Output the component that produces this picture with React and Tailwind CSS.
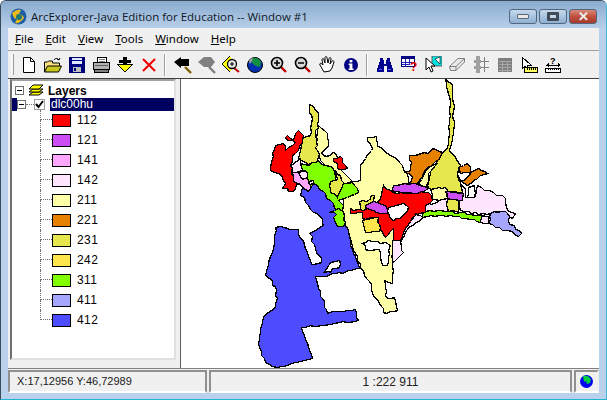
const palette = {
  112: "#ff0000",
  121: "#cc4df2",
  141: "#ffa6ff",
  142: "#ffe6ff",
  211: "#ffffa8",
  221: "#e68000",
  231: "#e6e64d",
  242: "#ffe64d",
  311: "#80ff00",
  411: "#a6a6ff",
  412: "#4d4dff",
};

const classes = [112, 121, 141, 142, 211, 221, 231, 242, 311, 411, 412];

// Land-cover parcels, painted back to front in map coordinates.
const parcels = [
  [211, "343,198 345,183 352,181 360,180 360,165 372,148 367,140 367,137 376,136 377,146 387,153 397,159 405,172 408,182 425,205 392,240 392,283 384,280 387,298 394,297 397,310 383,312 381,306 360,268 343,220"],
  [231, "445,79 452,84 453,130 452,140 449,150 460,165 457,173 462,192 445,190 428,188 430,170 438,160 442,152 447,147 449,130 450,100 447,90"],
  [142, "457,175 465,188 465,197 474,197 477,185 493,192 505,198 507,210 515,213 512,218 497,211 490,213 483,213 460,210 458,200 463,195"],
  [142, "424,205 447,198 448,211 424,212"],
  [231, "447,199 458,200 458,211 448,211"],
  [142, "422,217 420,220 408,227 400,242 403,252 392,262 392,240 400,238 405,228 415,214"],
  [142, "482,215 488,216 488,223 480,222"],
  [311, "422,213 425,211 448,211 460,212 482,215 480,222 450,215 422,217"],
  [411, "490,213 500,211 507,213 508,220 515,229 521,233 518,236 507,230 488,223"],
  [221, "409,155 427,153 432,148 442,152 438,160 427,167 417,183 407,185 412,177 405,172 410,170"],
  [221, "458,167 467,163 470,172 478,168 487,173 480,175 467,185 460,180 467,177 470,173 460,173"],
  [211, "418,183 428,167 437,163 428,173 427,188"],
  [211, "430,189 445,187 447,198 431,199"],
  [231, "359,201 369,200 371,195 374,195 374,202 365,205 365,210 360,210"],
  [112, "383,185 393,192 428,192 432,200 425,205 425,212 415,213 405,228 400,240 393,240 393,228 385,237 378,228 378,218 362,218 362,212 350,213 350,208 363,210 377,202 380,198"],
  [242, "362,220 378,217 379,231 365,232"],
  [121, "393,185 415,183 428,188 417,193 393,191"],
  [121, "365,205 373,201 385,205 388,213 380,213 365,207"],
  [121, "445,191 463,193 462,200 447,198"],
  [211, "318,125 327,133 328,145 321,152 326,156 333,152 337,158 341,170 352,181 345,183 338,180 335,175 320,160 318,152 315,147 317,132"],
  [231, "309,104 313,106 318,112 318,127 315,130 317,145 315,147 318,152 318,162 308,164 298,158 303,137 310,135 312,118 309,108"],
  [311, "300,163 308,165 318,160 325,165 333,168 335,180 340,184 352,182 358,192 343,198 338,200 343,205 343,218 345,222 343,226 337,226 331,222 333,217 328,210 300,185"],
  [231, "330,181 337,179 335,170 340,175 343,182 337,197 330,192"],
  [112, "333,158 340,156 342,162 347,168 338,169 337,163 333,161"],
  [112, "298,130 303,135 298,150 292,155 290,165 292,175 298,182 293,191 282,188 285,183 278,173 270,170 272,153 275,145 283,143 285,150 295,142 285,137 287,135 293,140 295,133"],
  [142, "290,165 300,158 302,170 292,173"],
  [141, "292,172 298,172 305,170 307,178 312,190 308,191 300,184 293,181"],
  [142, "298,172 305,170 307,177 302,179"],
  [142, "308,181 313,180 313,183 309,184"],
  [412, "302,187 308,191 313,183 333,203 342,218 347,227 350,240 359,268 323,276 315,276 327,313 355,309 358,320 301,327 312,358 277,367 265,362 258,343 264,315 275,307 277,298 272,280 265,275 268,262 273,248 275,227 298,229 311,264 321,262 309,233 323,225 322,218 313,212 300,195"],
  [311, "329,212 336,214 333,217 337,226 343,226 345,222 343,212 338,208"],
];

// Gaps left unclassified inside the built-up area.
const holes = [
  "388,207 403,203 408,207 403,215 393,220 388,213",
  "362,243 368,240 385,242 390,245 387,265 382,265 379,249 365,249",
  "330,262 339,260 339,267 332,268 330,272 323,272 327,267",
  "468,187 474,185 474,197 467,197",
];

// Raster-digitised boundaries are stair-stepped, so break each edge into short uneven runs.
function rough(points) {
  const pts = points.split(" ").map((p) => p.split(",").map(Number));
  const out = [];
  pts.forEach(([x, y], i) => {
    const [nx, ny] = pts[(i + 1) % pts.length];
    const steps = Math.max(1, Math.round(Math.hypot(nx - x, ny - y) / 4));
    for (let s = 0; s < steps; s++) {
      const px = x + ((nx - x) * s) / steps;
      const py = y + ((ny - y) * s) / steps;
      const h = Math.sin(px * 12.9898 + py * 78.233) * 43758.5453;
      const f = h - Math.floor(h);
      const off = s === 0 ? 0 : f < 0.2 ? -1 : f > 0.8 ? 1 : 0;
      out.push(`${Math.round(px + off) + 0.5},${Math.round(py - off) + 0.5}`);
    }
  });
  return out.join(" ");
}

function Cursor() {
  return <path d="M1 1v12l3-3 2 5 2-1-2-5h4z" fill="#fff" stroke="#000" />;
}

function MagnifierBase({ children }) {
  return (
    <svg width="18" height="18" viewBox="0 0 18 18">
      <path d="M10 10l6 6" stroke="#c00000" strokeWidth="2.4" />
      <circle cx="7" cy="7" r="5.500" fill="#d8d8d8" stroke="#000" strokeWidth="1.6" />
      {children}
    </svg>
  );
}

// Toolbar glyphs, drawn on a small grid.
const icons = {
  newFile: (
    <svg width="14" height="16" viewBox="0 0 14 16">
      <path d="M1.500.5h7l4 4v11h-11z" fill="#fff" stroke="#000" />
      <path d="M8.500.5v4h4" fill="none" stroke="#000" />
    </svg>
  ),
  open: (
    <svg width="18" height="16" viewBox="0 0 18 16">
      <path d="M10 3c1-2 4-2 5 0M15 3l-2-1M15 3l1-2" fill="none" stroke="#000" />
      <path d="M.5 15V5h3l1-1h4v2h7v3" fill="#ffe080" stroke="#000" />
      <path d="M.5 15l3-6h14l-3 6z" fill="#c8c820" stroke="#000" />
    </svg>
  ),
  save: (
    <svg width="16" height="16" viewBox="0 0 16 16" shapeRendering="crispEdges">
      <rect width="15" height="15" x=".5" y=".5" fill="#000080" stroke="#00006a" />
      <rect x="3" y="1" width="10" height="6" fill="#dfe6ff" />
      <rect x="3" y="3" width="10" height="1" fill="#000080" />
      <rect x="4" y="10" width="8" height="5" fill="#c0c0c0" />
      <rect x="5" y="11" width="2" height="3" fill="#000080" />
    </svg>
  ),
  print: (
    <svg width="17" height="16" viewBox="0 0 17 16" shapeRendering="crispEdges">
      <path d="M5 .5h8l1 5H4z" fill="#fff" stroke="#000" />
      <path d="M6 2h6M6 4h6" stroke="#808080" />
      <rect x=".5" y="5.500" width="16" height="7" fill="#b0b0b0" stroke="#000" />
      <rect x="2" y="8" width="13" height="1" fill="#606060" />
      <rect x="1.500" y="12.500" width="14" height="3" fill="#808080" stroke="#000" />
    </svg>
  ),
  download: (
    <svg width="16" height="16" viewBox="0 0 16 16" shapeRendering="crispEdges">
      <path d="M6 0h4v3h4v3h-4v1H6V6H2V3h4z" fill="#000" />
      <path d="M.5 7.500h15L8 15z" fill="#ffff00" stroke="#000" />
    </svg>
  ),
  close: (
    <svg width="14" height="14" viewBox="0 0 14 14">
      <path d="M1 1l12 12M13 1L1 13" stroke="#f00000" strokeWidth="2" />
    </svg>
  ),
  back: (
    <svg width="18" height="18" viewBox="0 0 18 18">
      <path d="M11 11l6 6" stroke="#806000" strokeWidth="2.4" />
      <path d="M0 6l7-5v2h8v7H7v2z" fill="#000" />
    </svg>
  ),
  forward: (
    <svg width="18" height="18" viewBox="0 0 18 18">
      <path d="M11 11l6 6" stroke="#808080" strokeWidth="2.4" />
      <path d="M0 6l6-5h7l4 5-4 5H6z" fill="#808080" />
    </svg>
  ),
  fullExtent: (
    <svg width="18" height="18" viewBox="0 0 18 18">
      <path d="M8 0l-8 8 8 8" fill="#ffff00" stroke="#000" />
      <path d="M8 1L1 8l7 7 4-4V5z" fill="#ffff00" />
      <path d="M12 12l5 4" stroke="#c00000" strokeWidth="2" />
      <circle cx="10" cy="8" r="4.500" fill="#e8e8e8" stroke="#000" strokeWidth="1.3" />
      <path d="M8 8h4M10 6v4" stroke="#000" />
    </svg>
  ),
  globe: (
    <svg width="16" height="16" viewBox="0 0 16 16">
      <circle cx="8" cy="8" r="7.500" fill="#0030b0" stroke="#000" />
      <path d="M6 1c3-1 7 1 8 4l-1 5-4-1-3-2-2-3z" fill="#109040" />
      <path d="M2 4C3 2 5 1 6 1L5 4 3 7z" fill="#a0a0a0" />
    </svg>
  ),
  zoomIn: (
    <MagnifierBase>
      <path d="M4 7h6M7 4v6" stroke="#000" strokeWidth="1.6" />
    </MagnifierBase>
  ),
  zoomOut: (
    <MagnifierBase>
      <path d="M4 7h6" stroke="#000" strokeWidth="1.6" />
    </MagnifierBase>
  ),
  hand: (
    <svg width="16" height="17" viewBox="0 0 16 17">
      <path d="M5 16L1 9c-1-2 1-2 2-1l1 1-1-5c0-2 2-2 2 0l1 3V2c0-2 2-2 2 0l1 5 1-4c0-2 2-2 2 0l-1 5 2-3c1-1 2 0 2 1l-2 6-2 3z" fill="#fff" stroke="#000" />
    </svg>
  ),
  info: (
    <svg width="14" height="14" viewBox="0 0 14 14">
      <circle cx="7" cy="7" r="7" fill="#000080" />
      <rect x="5.600" y="2" width="2.800" height="2.400" fill="#fff" />
      <path d="M4.600 5.600h3.800v5h1.200V12H4.600v-1.400h1V7H4.600z" fill="#fff" />
    </svg>
  ),
  find: (
    <svg width="16" height="14" viewBox="0 0 16 14" shapeRendering="crispEdges">
      <path d="M3 0h3v2h1v4h2V2h1V0h3v3l3 8v3h-6V8H7v6H0v-3l3-8z" fill="#000090" />
      <path d="M2 11h3M11 11h3" stroke="#6060ff" />
    </svg>
  ),
  attributes: (
    <svg width="16" height="17" viewBox="0 0 16 17" shapeRendering="crispEdges">
      <rect x=".5" y=".5" width="13" height="10" fill="#fff" stroke="#000080" />
      <rect x="1" y="1" width="12" height="2" fill="#000080" />
      <path d="M1 6h12M1 8.500h7M4.500 3v8M8.500 3v6" stroke="#2020c0" />
      <text x="9" y="15" fontFamily="Liberation Sans, sans-serif" fontSize="12" fontWeight="700" fill="#f00000">?</text>
    </svg>
  ),
  select: (
    <svg width="17" height="17" viewBox="0 0 17 17">
      <rect x="7" y="0" width="10" height="10" fill="#00e0e0" stroke="#606060" />
      <path d="M10 3l5 5V1z" fill="#fff" stroke="#000" strokeWidth=".6" />
      <g transform="translate(0 1)">
        <Cursor />
      </g>
    </svg>
  ),
  eraser: (
    <svg width="16" height="13" viewBox="0 0 16 13">
      <path d="M.5 8.500L9 .5h6.500v3.500L7 12.500H1.500z" fill="#e8e8e8" stroke="#808080" />
      <path d="M.5 8.500h6.500v4M7 8.500l8.500-8" fill="none" stroke="#808080" />
    </svg>
  ),
  graticule: (
    <svg width="15" height="17" viewBox="0 0 15 17" shapeRendering="crispEdges">
      <path d="M2 0h4v17H2zM0 4h7v3H0zM0 10h7v3H0z" fill="#a0a0a0" />
      <path d="M10 1v15M7 5h8M7 11h8" stroke="#808080" />
    </svg>
  ),
  table: (
    <svg width="14" height="14" viewBox="0 0 14 14" shapeRendering="crispEdges">
      <rect width="14" height="14" fill="#808080" />
      <path d="M1 3.500h12M1 6.500h12M1 9.500h12M1 12.500h12M4.500 3v11M9.500 3v11" stroke="#a8a8a8" />
    </svg>
  ),
  measure: (
    <svg width="17" height="17" viewBox="0 0 17 17" shapeRendering="crispEdges">
      <Cursor />
      <rect x="3.500" y="11.500" width="13" height="5" fill="#ffff60" stroke="#000" />
      <path d="M6 12v2M8 12v2M10 12v2M12 12v2M14 12v2" stroke="#000" />
    </svg>
  ),
  scale: (
    <svg width="16" height="16" viewBox="0 0 16 16" shapeRendering="crispEdges">
      <path d="M1 8h14M3 6v4M2 7v2M13 6v4M14 7v2" stroke="#000" />
      <text x="5" y="7" fontFamily="Liberation Sans, sans-serif" fontSize="9" fontWeight="700" fill="#000">?</text>
      <rect x=".5" y="11.500" width="15" height="4" fill="#fff" stroke="#000" />
      <path d="M3 12v1M5 12v1M7 12v1M9 12v1M11 12v1M13 12v1" stroke="#000" />
    </svg>
  ),
};

const fileTools = ["newFile", "open", "save", "print", "download", "close"];
const mapTools = ["back", "forward", "fullExtent", "globe", "zoomIn", "zoomOut", "hand", "info"];
const queryTools = ["find", "attributes", "select", "eraser", "graticule", "table", "measure", "scale"];

function ToolButton({ name }) {
  return <div className="flex h-6 w-6 shrink-0 items-center justify-center">{icons[name]}</div>;
}

function Separator() {
  return <div className="ml-[3px] mr-[5px] h-[22px] w-[2px] shrink-0 border-l border-r border-l-[#a0a0a0] border-r-white" />;
}

function LegendRow({ code, last }) {
  return (
    <div className="flex h-5 items-center">
      <div className="flex h-5 w-3 shrink-0 flex-col">
        <div className="h-[10px] border-b border-l border-dotted border-[#707070]" />
        {!last && <div className="h-[10px] border-l border-dotted border-[#707070]" />}
      </div>
      <div className="h-[13px] w-[19px] shrink-0 border border-black" style={{ backgroundColor: palette[code] }} />
      <span className="ml-[6px] tracking-[0.4px]">{code}</span>
    </div>
  );
}

function WindowButton({ className, children }) {
  return (
    <div className={`flex h-[15px] w-7 items-center justify-center rounded-[3px] border border-[#51677f] ${className}`}>
      {children}
    </div>
  );
}

export default function App() {
  return (
    <div className="flex h-[400px] w-[607px] flex-col overflow-hidden rounded-t-[6px] border border-[#37495a] border-b-[#20b8d0] border-r-[#40b8d0] bg-[#b9d1ea] font-['Liberation_Sans',sans-serif] text-[12px] text-black">
      <header className="flex h-[27px] shrink-0 items-center bg-gradient-to-b from-[#8aabd0] to-[#b7cfe8] pl-[9px] pr-[9px] pt-[4px]">
        <svg width="17" height="17" viewBox="0 0 17 17" className="shrink-0">
          <circle cx="8.500" cy="8.500" r="8" fill="#1c5fa8" />
          <path d="M2 5c3-3 6-4 9-3l-2 4c2 0 4 1 5 4-3 4-6 6-9 5l2-4C4 11 3 8 2 5z" fill="#e8b820" />
          <circle cx="9" cy="9" r="3" fill="#207a70" />
        </svg>
        <span className="ml-1 whitespace-nowrap font-['Open_Sans',sans-serif] text-[11.5px] text-[#101828]">
          ArcExplorer-Java Edition for Education -- Window #1
        </span>
        <div className="ml-auto flex gap-[2px]">
          <WindowButton className="bg-gradient-to-b from-[#c5d8ec] to-[#8fb0d3]">
            <div className="h-[5px] w-[12px] rounded-[1px] border border-[#5a6a7a] bg-[#e8e8e8]" />
          </WindowButton>
          <WindowButton className="bg-gradient-to-b from-[#c5d8ec] to-[#8fb0d3]">
            <div className="h-[9px] w-[12px] rounded-[1px] border-[3px] border-[#404a58] bg-[#c8d8e8]" />
          </WindowButton>
          <WindowButton className="border-[#5a2020] bg-gradient-to-b from-[#d98a78] via-[#c0503e] to-[#a53a2c]">
            <span className="text-[13px] font-bold leading-none text-[#f0f0f0]">✕</span>
          </WindowButton>
        </div>
      </header>

      <div className="mx-[7px] flex h-[365px] flex-col bg-[#f0f0f0]">
        <nav className="flex h-[22px] shrink-0 items-center gap-[12px] pl-[7px] font-['Noto_Sans',sans-serif] text-[11.5px]">
          <span><u>F</u>ile</span>
          <span><u>E</u>dit</span>
          <span><u>V</u>iew</span>
          <span><u>T</u>ools</span>
          <span><u>W</u>indow</span>
          <span><u>H</u>elp</span>
        </nav>

        <div className="flex h-[29px] shrink-0 items-center border-b border-t border-b-[#404040] border-t-[#a0a0a0] pl-[3px]">
          <div className="mr-[3px] h-[21px] w-[3px] shrink-0 border-l border-r border-l-white border-r-[#a0a0a0]" />
          {fileTools.map((t) => <ToolButton key={t} name={t} />)}
          <Separator />
          {mapTools.map((t) => <ToolButton key={t} name={t} />)}
          <Separator />
          {queryTools.map((t) => <ToolButton key={t} name={t} />)}
        </div>

        <main className="flex min-h-0 flex-1">
          <aside className="flex w-[172px] shrink-0 flex-col pb-[8px] pl-[2px] pr-[4px]">
            <div className="flex-1 overflow-hidden border-2 border-b-[#e0e0e0] border-l-[#707070] border-r-[#e0e0e0] border-t-[#a0a0a0] bg-white pt-[2px]">
              <div className="flex h-[15px] items-center pl-[3px]">
                <div className="flex h-[9px] w-[9px] items-center justify-center border border-[#707070]">
                  <div className="h-px w-[5px] bg-black" />
                </div>
                <svg width="16" height="14" viewBox="0 0 16 14" className="ml-[4px]">
                  <path d="M1 11l4-3h10l-4 3z" fill="#ffff00" stroke="#000" />
                  <path d="M1 8l4-3h10l-4 3z" fill="#ffff00" stroke="#000" />
                  <path d="M1 5l4-4h10l-4 4z" fill="#ffff00" stroke="#000" />
                </svg>
                <span className="ml-[4px] font-bold">Layers</span>
              </div>
              <div className="flex h-[13px] items-center">
                <div className="h-full w-[5px] shrink-0 bg-[#000060]" />
                <div className="flex h-[9px] w-[9px] shrink-0 items-center justify-center border border-[#707070] bg-white">
                  <div className="h-px w-[5px] bg-black" />
                </div>
                <div className="w-[8px] border-t border-dotted border-[#707070]" />
                <div className="flex h-[11px] w-[11px] shrink-0 items-center justify-center border border-[#a0a0a0]">
                  <svg width="9" height="9" viewBox="0 0 9 9">
                    <path d="M1 4l2.500 3L8 1" fill="none" stroke="#000" strokeWidth="2" />
                  </svg>
                </div>
                <div className="ml-[5px] h-full flex-1 bg-[#000060] pl-[1px] leading-[13px] text-white">
                  dlc00hu
                </div>
              </div>
              <div className="ml-[28px] mt-[-1px]">
                {classes.map((c, i) => (
                  <LegendRow key={c} code={c} last={i === classes.length - 1} />
                ))}
              </div>
            </div>
          </aside>
          <section className="min-w-0 flex-1 border-l border-[#606060] bg-white">
            <svg width="417" height="289" viewBox="181 79 417 289" className="block" shapeRendering="crispEdges">
              {parcels.map(([code, points], i) => (
                <polygon key={i} points={rough(points)} fill={palette[code]} stroke="#000" strokeWidth="1.3" />
              ))}
              {holes.map((points, i) => (
                <polygon key={i} points={rough(points)} fill="#fff" stroke="#000" strokeWidth="1.3" />
              ))}
            </svg>
          </section>
        </main>

        <footer className="flex h-[25px] shrink-0 gap-[2px] border-t border-[#808080] pt-[1px]">
          <div className="flex h-[23px] w-[199px] items-center border-2 border-b-white border-l-[#909090] border-r-[#909090] border-t-[#909090] pl-[7px] text-[11px] text-[#202020]">
            X:17,12956 Y:46,72989
          </div>
          <div className="flex h-[23px] flex-1 items-center justify-center border-2 border-b-white border-l-[#909090] border-r-[#909090] border-t-[#909090] text-[#202020]">
            1 :222 911
          </div>
          <div className="flex h-[23px] w-[25px] items-center justify-center border-2 border-b-white border-l-[#909090] border-r-[#f0f0f0] border-t-[#909090]">
            <svg width="13" height="13" viewBox="0 0 13 13">
              <circle cx="6.500" cy="6.500" r="6.500" fill="#0000f0" />
              <path d="M3 1c3-1 6 0 8 3l-1 4-3 1-1-3-2 1z" fill="#00d040" />
            </svg>
          </div>
        </footer>
      </div>
    </div>
  );
}
